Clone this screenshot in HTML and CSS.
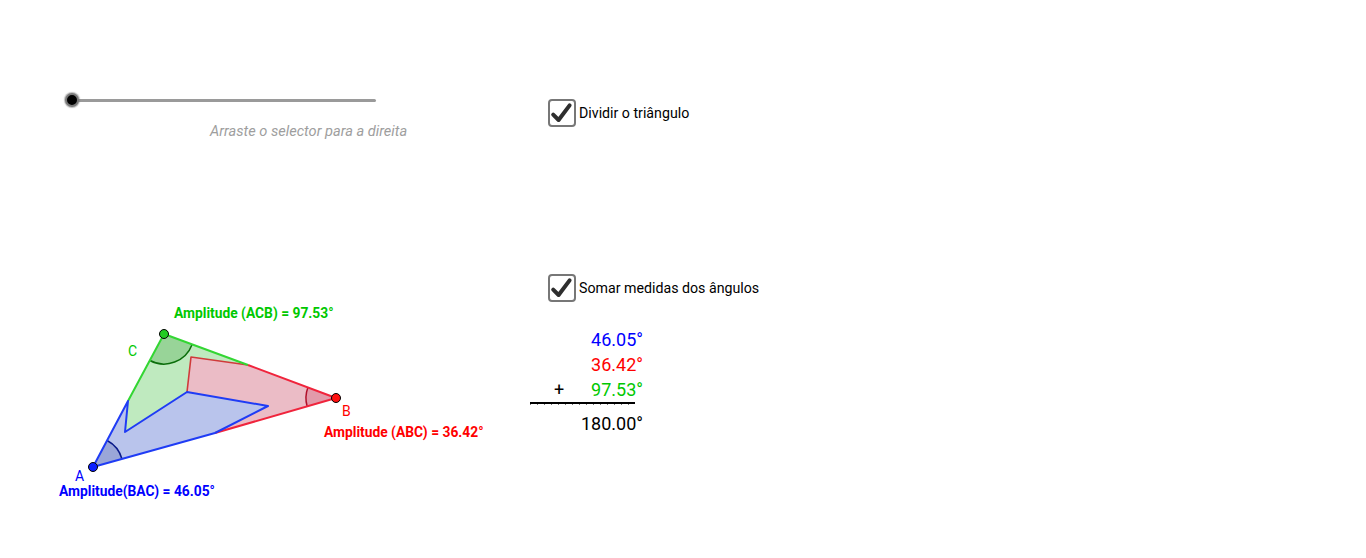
FILE: index.html
```html
<!DOCTYPE html>
<html lang="pt">
<head>
<meta charset="utf-8">
<title>Soma dos ângulos internos</title>
<link rel="stylesheet" href="styles.css">
</head>
<body>
<div class="applet">
  <div class="left">
    <div class="slider">
      <span class="knob"></span>
      <span class="track"></span>
    </div>
    <p class="hint">Arraste o selector para a direita</p>
    <svg class="figure" width="500" height="230" viewBox="0 290 500 230" xmlns="http://www.w3.org/2000/svg">
      <!-- pieces -->
      <polygon class="fill-g" points="164,334 248,365 191,357 187,392 125,432 128,401"/>
      <polygon class="fill-r" points="248,365 336,398 215,433 268,406 187,392 191,357"/>
      <polygon class="fill-b" points="93,467 128,401 125,432 187,392 268,406 215,433"/>
      <!-- angle sectors -->
      <path class="sec-b" d="M93,467 L107.1,440.5 A30 30 0 0 1 121.9,458.8 Z"/>
      <path class="sec-g" d="M164,334 L149.9,360.5 A30 30 0 0 0 192.1,344.5 Z"/>
      <path class="sec-r" d="M336,398 L307.1,406.2 A30 30 0 0 1 307.9,387.5 Z"/>
      <path class="arc-b" d="M107.1,440.5 A30 30 0 0 1 121.9,458.8"/>
      <path class="arc-g" d="M149.9,360.5 A30 30 0 0 0 192.1,344.5"/>
      <path class="arc-r" d="M307.1,406.2 A30 30 0 0 1 307.9,387.5"/>
      <!-- edges -->
      <polyline class="edge-m" points="248,365 191,357 187,392"/>
      <polyline class="edge-g" points="128,401 164,334 248,365"/>
      <polyline class="edge-r" points="248,365 336,398 215,433"/>
      <polyline class="edge-b" points="215,433 93,467 128,401 125,432 187,392 268,406 215,433"/>
      <!-- vertices -->
      <circle class="pt-b" cx="93" cy="467" r="4.5"/>
      <circle class="pt-g" cx="164" cy="334" r="4.5"/>
      <circle class="pt-r" cx="336" cy="398" r="4.5"/>
      <!-- labels -->
      <text class="lbl lbl-g" x="128" y="355.5">C</text>
      <text class="lbl lbl-b" x="75" y="480.5">A</text>
      <text class="lbl lbl-r" x="342" y="415.5">B</text>
      <text class="amp amp-g" x="174" y="318">Amplitude (ACB) = 97.53°</text>
      <text class="amp amp-r" x="324" y="437">Amplitude (ABC) = 36.42°</text>
      <text class="amp amp-b" x="59" y="496">Amplitude(BAC) = 46.05°</text>
    </svg>
  </div>
  <div class="right">
    <label class="check check-first">
      <span class="box"><svg width="24" height="24" viewBox="0 0 24 24"><polyline points="3.2,13.6 8.6,19 19.6,4.4"/></svg></span>
      <span class="check-text">Dividir o triângulo</span>
    </label>
    <label class="check check-second">
      <span class="box"><svg width="24" height="24" viewBox="0 0 24 24"><polyline points="3.2,13.6 8.6,19 19.6,4.4"/></svg></span>
      <span class="check-text">Somar medidas dos ângulos</span>
    </label>
    <div class="sum">
      <div class="row c-blue">46.05°</div>
      <div class="row c-red">36.42°</div>
      <div class="row c-green"><span class="plus">+</span>97.53°</div>
      <div class="rule"></div>
      <div class="row total">180.00°</div>
    </div>
  </div>
</div>
</body>
</html>
```

FILE: styles.css
```css
html, body {
  margin: 0;
  padding: 0;
  background: #ffffff;
}

body {
  font-family: Roboto, "Liberation Sans", sans-serif;
  color: #000000;
}

.applet {
  display: flex;
  width: 1366px;
  height: 558px;
  overflow: hidden;
}

.left {
  width: 530px;
  flex: 0 0 530px;
}

.slider {
  display: flex;
  align-items: center;
  margin: 93px 0 0 65px;
  height: 14px;
}

.knob {
  position: relative;
  z-index: 1;
  width: 10px;
  height: 10px;
  border-radius: 50%;
  background: #000000;
  border: 2px solid #7a7a7a;
  box-shadow: 0 0 1px 1px rgba(120, 120, 120, 0.5);
  flex: 0 0 auto;
}

.track {
  flex: 0 0 304px;
  height: 3px;
  margin-left: -7px;
  background: #9a9a9a;
  border-radius: 0 2px 2px 0;
}

.hint {
  margin: 15px 0 0 210px;
  font-size: 14.6px;
  line-height: 18px;
  font-style: italic;
  color: #9e9e9e;
  white-space: nowrap;
}

.figure {
  display: block;
  margin-top: 150px;
}

.fill-g { fill: #bfeabf; stroke: none; }
.fill-r { fill: #ebbcc6; stroke: none; }
.fill-b { fill: #b9c4ec; stroke: none; }

.sec-b { fill: #9aa6d8; }
.sec-g { fill: #98d498; }
.sec-r { fill: #e29aaa; }

.arc-b, .arc-g, .arc-r {
  fill: none;
  stroke-width: 1.5;
}
.arc-b { stroke: #0a1a8a; }
.arc-g { stroke: #0b6e0b; }
.arc-r { stroke: #b0102a; }

.edge-g, .edge-r, .edge-b, .edge-m {
  fill: none;
  stroke-width: 2;
  stroke-linejoin: round;
}
.edge-g { stroke: #33d633; }
.edge-r { stroke: #f0243c; }
.edge-b { stroke: #1f3cf5; }
.edge-m { stroke: #d03a3a; stroke-width: 1.6; }

.pt-b, .pt-g, .pt-r { stroke: #000000; stroke-width: 1; }
.pt-b { fill: #0a1eff; }
.pt-g { fill: #22cc22; }
.pt-r { fill: #ff1010; }

.lbl {
  font-family: Roboto, "Liberation Sans", sans-serif;
  font-size: 14px;
}
.amp {
  font-family: Roboto, "Liberation Sans", sans-serif;
  font-size: 13.8px;
  font-weight: bold;
}
.lbl-g, .amp-g { fill: #00c800; }
.lbl-r, .amp-r { fill: #ff0000; }
.lbl-b, .amp-b { fill: #0000ff; }

.right {
  flex: 1 1 auto;
}

.check {
  display: flex;
  align-items: center;
  margin-left: 18px;
  height: 28px;
}

.check-first { margin-top: 99px; }
.check-second { margin-top: 147px; }

.box {
  width: 24px;
  height: 24px;
  border: 2px solid #777777;
  border-radius: 4px;
  background: #ffffff;
  flex: 0 0 auto;
}

.box svg {
  display: block;
}

.box polyline {
  fill: none;
  stroke: #2e2e2e;
  stroke-width: 4;
  stroke-linecap: round;
  stroke-linejoin: round;
}

.check-text {
  margin-left: 3px;
  font-size: 14.2px;
  color: #000000;
  white-space: nowrap;
}

.sum {
  width: 113px;
  margin-top: 25px;
  font-size: 18px;
}

.row {
  display: flex;
  justify-content: flex-end;
  height: 25px;
  line-height: 25px;
}

.plus {
  margin-left: 24px;
  margin-right: auto;
  color: #000000;
}

.c-blue { color: #0000ff; }
.c-red { color: #ff0000; }
.c-green { color: #00c800; }

.rule {
  width: 105px;
  height: 3px;
  margin-bottom: 6px;
  border-top: 2px solid #000000;
  box-sizing: border-box;
  background: repeating-linear-gradient(90deg, #777777 0, #777777 1px, transparent 1px, transparent 7px);
}

.total {
  color: #000000;
}
```
